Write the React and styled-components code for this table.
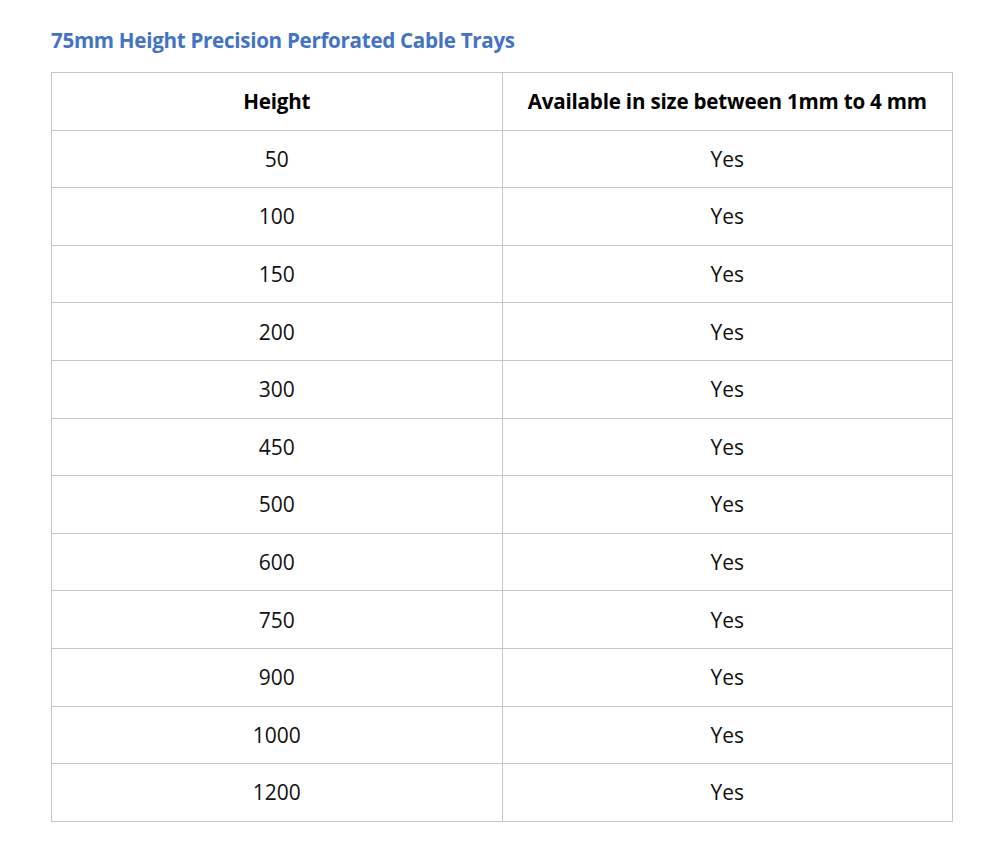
import React from 'react';
import styled, { createGlobalStyle } from 'styled-components';

const heights = [50, 100, 150, 200, 300, 450, 500, 600, 750, 900, 1000, 1200];

function App() {
  return (
    <Page>
      <GlobalStyle />
      <Title>75mm Height Precision Perforated Cable Trays</Title>
      <Table>
        <thead>
          <tr>
            <HeadCell>Height</HeadCell>
            <HeadCell>Available in size between 1mm to 4 mm</HeadCell>
          </tr>
        </thead>
        <tbody>
          {heights.map((h) => (
            <tr key={h}>
              <Cell>{h}</Cell>
              <Cell>Yes</Cell>
            </tr>
          ))}
        </tbody>
      </Table>
    </Page>
  );
}

const GlobalStyle = createGlobalStyle`
  body {
    margin: 0;
    background: #ffffff;
    font-family: "Open Sans", "Noto Sans", sans-serif;
  }
`;

const Page = styled.div`
  padding: 26px 0 0 51px;
  width: 902px;
`;

const Title = styled.h1`
  margin: 0 0 18px;
  font-size: 20.6px;
  line-height: 28px;
  font-weight: 700;
  color: #4472c4;
  letter-spacing: -0.3px;
`;

const Table = styled.table`
  width: 902px;
  border-collapse: collapse;
  table-layout: fixed;
`;

const HeadCell = styled.th`
  height: 56.6px;
  padding: 0;
  border: 1px solid #c6c6c6;
  font-size: 20.6px;
  font-weight: 700;
  color: #000;
  text-align: center;
  vertical-align: middle;
  letter-spacing: -0.2px;
`;

const Cell = styled.td`
  height: 56.6px;
  padding: 0;
  border: 1px solid #c6c6c6;
  font-size: 21px;
  color: #111;
  text-align: center;
  vertical-align: middle;
`;

export default App;
